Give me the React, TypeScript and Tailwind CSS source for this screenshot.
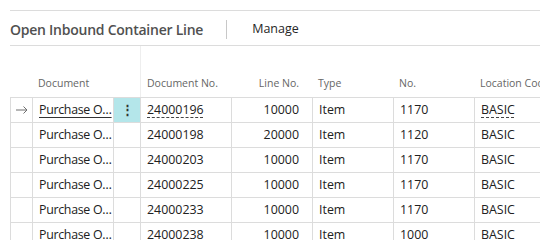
const rows = [
  { docNo: '24000196', line: '10000', no: '1170', active: true },
  { docNo: '24000198', line: '20000', no: '1120' },
  { docNo: '24000203', line: '10000', no: '1170' },
  { docNo: '24000225', line: '10000', no: '1170' },
  { docNo: '24000233', line: '10000', no: '1170' },
  { docNo: '24000238', line: '10000', no: '1000' },
];

const cols = 'grid grid-cols-[22px_81px_27px_91px_81px_81px_81px_1fr]';
const cell = 'h-[25px] border-b border-l border-[#dcdcdc] flex items-center overflow-hidden whitespace-nowrap';

function App() {
  return (
    <div
      className="w-[540px] h-[240px] overflow-hidden bg-white pt-[10px] pl-[10px] text-[#212121]"
      style={{ fontFamily: '"Open Sans", "Noto Sans", sans-serif' }}
    >
      {/* Title bar */}
      <div className="h-[36px] border-y border-[#dcdcdc] flex items-center pt-[3px]">
        <h1 className="text-[14px] font-semibold text-[#505050] tracking-[-0.25px]">Open Inbound Container Line</h1>
        <div className="w-px h-[19px] bg-[#c8c8c8] ml-[23px] mr-[25px]" />
        <span className="text-[12.5px] text-[#262626]">Manage</span>
      </div>

      {/* Header */}
      <div className={`${cols} h-[52px] border-b border-[#dcdcdc] text-[10.5px] text-[#666]`}>
        <div />
        <div className="flex items-end pb-[5px] pl-[6px]">Document</div>
        <div />
        <div className="flex items-end pb-[5px] pl-[6px] border-l border-[#eeeeee]">Document No.</div>
        <div className="flex items-end justify-end pb-[5px] pr-[13px]">Line No.</div>
        <div className="flex items-end pb-[5px] pl-[6px]">Type</div>
        <div className="flex items-end pb-[5px] pl-[6px]">No.</div>
        <div className="flex items-end pb-[5px] pl-[6px] whitespace-nowrap overflow-hidden">Location Code</div>
      </div>

      {/* Rows */}
      {rows.map((r) => (
        <div key={r.docNo} className={`${cols} text-[12.4px]`}>
          <div className={`${cell} justify-center`}>
            {r.active && (
              <svg width="12" height="8" viewBox="0 0 12 8" fill="none" stroke="#6e6e6e" strokeWidth="1">
                <path d="M0 4h11M7.5 0.5L11 4L7.5 7.5" />
              </svg>
            )}
          </div>
          <div className={`${cell} pl-[6px]`}>
            <span className={`tracking-[-0.3px] ${r.active ? 'underline underline-offset-[3px] decoration-[#333]' : ''}`}>Purchase O…</span>
          </div>
          <div className={`${cell} justify-center ${r.active ? 'bg-[#b4e6ea]' : ''}`}>
            {r.active && <span className="text-[#333] font-bold text-[13px]">⋮</span>}
          </div>
          <div className={`${cell} pl-[6px]`}>
            <span className={r.active ? 'underline decoration-dashed underline-offset-[3px] decoration-[#444]' : ''}>{r.docNo}</span>
          </div>
          <div className={`${cell} justify-end pr-[13px]`}>{r.line}</div>
          <div className={`${cell} pl-[6px]`}>Item</div>
          <div className={`${cell} pl-[6px]`}>{r.no}</div>
          <div className={`${cell} pl-[6px]`}>
            <span className={r.active ? 'underline decoration-dashed underline-offset-[3px] decoration-[#444]' : ''}>BASIC</span>
          </div>
        </div>
      ))}
    </div>
  );
}

export default App;
